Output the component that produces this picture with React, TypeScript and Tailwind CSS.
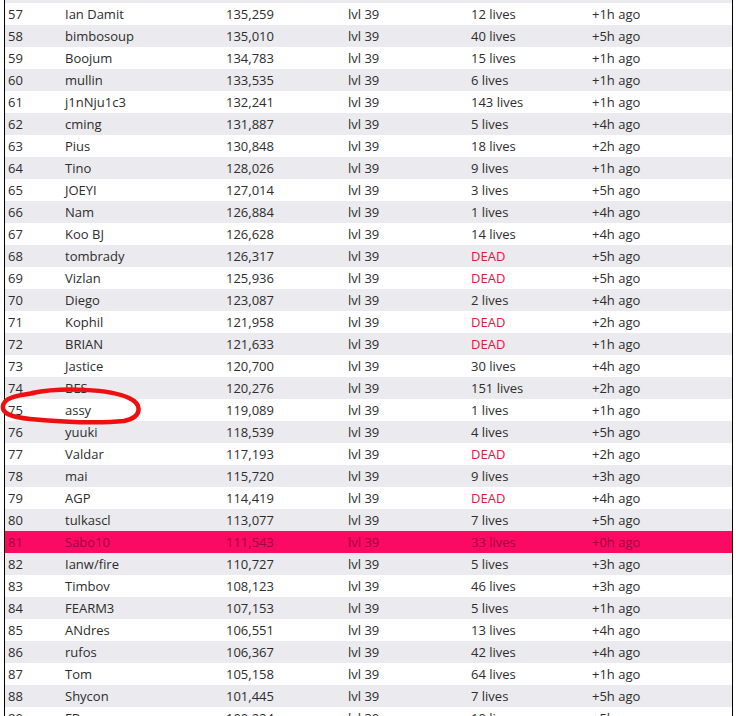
type Row = [number, string, string, string, string];

const rows: Row[] = [
  [57, 'Ian Damit', '135,259', '12 lives', '+1h ago'],
  [58, 'bimbosoup', '135,010', '40 lives', '+5h ago'],
  [59, 'Boojum', '134,783', '15 lives', '+1h ago'],
  [60, 'mullin', '133,535', '6 lives', '+1h ago'],
  [61, 'j1nNju1c3', '132,241', '143 lives', '+1h ago'],
  [62, 'cming', '131,887', '5 lives', '+4h ago'],
  [63, 'Pius', '130,848', '18 lives', '+2h ago'],
  [64, 'Tino', '128,026', '9 lives', '+1h ago'],
  [65, 'JOEYI', '127,014', '3 lives', '+5h ago'],
  [66, 'Nam', '126,884', '1 lives', '+4h ago'],
  [67, 'Koo BJ', '126,628', '14 lives', '+4h ago'],
  [68, 'tombrady', '126,317', 'DEAD', '+5h ago'],
  [69, 'Vizlan', '125,936', 'DEAD', '+5h ago'],
  [70, 'Diego', '123,087', '2 lives', '+4h ago'],
  [71, 'Kophil', '121,958', 'DEAD', '+2h ago'],
  [72, 'BRIAN', '121,633', 'DEAD', '+1h ago'],
  [73, 'Jastice', '120,700', '30 lives', '+4h ago'],
  [74, 'BES', '120,276', '151 lives', '+2h ago'],
  [75, 'assy', '119,089', '1 lives', '+1h ago'],
  [76, 'yuuki', '118,539', '4 lives', '+5h ago'],
  [77, 'Valdar', '117,193', 'DEAD', '+2h ago'],
  [78, 'mai', '115,720', '9 lives', '+3h ago'],
  [79, 'AGP', '114,419', 'DEAD', '+4h ago'],
  [80, 'tulkascl', '113,077', '7 lives', '+5h ago'],
  [81, 'Sabo10', '111,543', '33 lives', '+0h ago'],
  [82, 'Ianw/fire', '110,727', '5 lives', '+3h ago'],
  [83, 'Timbov', '108,123', '46 lives', '+3h ago'],
  [84, 'FEARM3', '107,153', '5 lives', '+1h ago'],
  [85, 'ANdres', '106,551', '13 lives', '+4h ago'],
  [86, 'rufos', '106,367', '42 lives', '+4h ago'],
  [87, 'Tom', '105,158', '64 lives', '+1h ago'],
  [88, 'Shycon', '101,445', '7 lives', '+5h ago'],
  [89, 'FB', '100,224', '10 lives', '+5h ago'],
];

export default function App() {
  return (
    <div className="relative h-[716px] overflow-hidden bg-white font-['Open_Sans',sans-serif] text-[13px] text-[#2d2d2d]">
      <div className="ml-[4px] w-[729px] border-x border-black">
        {/* tail of row 56, only a sliver shows */}
        <div className="h-[3px] bg-[#ebeaee]" />
        {rows.map(([rank, name, score, lives, ago]) => {
          const mine = rank === 81;
          const bg = mine ? 'bg-[#fb0a63] text-[#a0063b]' : rank % 2 === 0 ? 'bg-[#ebeaee]' : 'bg-white';
          return (
            <div
              key={rank}
              className={`grid h-[22px] grid-cols-[57px_161px_122px_123px_121px_1fr] items-center pl-[3px] leading-none ${bg}`}
            >
              <span>{rank}</span>
              <span>{name}</span>
              <span>{score}</span>
              <span>lvl 39</span>
              <span className={lives === 'DEAD' ? 'text-[#e0163f]' : ''}>{lives}</span>
              <span>{ago}</span>
            </div>
          );
        })}
      </div>

      {/* marker scribble round row 75 */}
      <svg className="pointer-events-none absolute left-0 top-0" width="738" height="716">
        <path
          d="M32 393 C62 387, 110 389, 129 398 C142 404, 143 417, 124 421 C95 424, 52 421, 30 419 C10 417, 2 413, 3 406 C4 399, 12 396, 34 393"
          fill="none"
          stroke="#ee0f0f"
          strokeWidth="4.5"
          strokeLinecap="round"
        />
      </svg>
    </div>
  );
}
